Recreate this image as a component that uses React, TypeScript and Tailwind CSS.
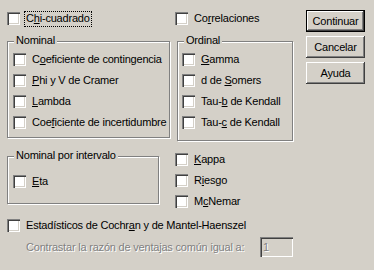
import React from "react";

const face = "bg-[#d4d0c8]";

function Box() {
  return (
    <span className="block w-[13px] h-[13px] shrink-0 bg-white shadow-[inset_1px_1px_0_#808080,inset_2px_2px_0_#404040,inset_-1px_-1px_0_#fff,inset_-2px_-2px_0_#d4d0c8]" />
  );
}

interface CheckProps {
  children: React.ReactNode;
  focused?: boolean;
}

function Check({ children, focused }: CheckProps) {
  return (
    <div className="flex items-center h-[13px]">
      <Box />
      {focused ? (
        <span className="ml-[4px] px-[1px] h-[16px] flex items-center border border-dotted border-black">
          {children}
        </span>
      ) : (
        <span className="ml-[6px] whitespace-nowrap">{children}</span>
      )}
    </div>
  );
}

interface GroupProps {
  title: string;
  className: string;
  children?: React.ReactNode;
}

function Group({ title, className, children }: GroupProps) {
  return (
    <div
      className={`relative border border-[#808080] shadow-[inset_1px_1px_0_#fff,1px_1px_0_#fff] ${className}`}
    >
      <span className={`absolute top-[-8px] left-[6px] px-[2px] leading-[13px] whitespace-nowrap ${face}`}>
        {title}
      </span>
      {children}
    </div>
  );
}

function Button({ label, primary }: { label: string; primary?: boolean }) {
  return (
    <div
      className={`w-[59px] h-[22px] flex items-center justify-center ${face} shadow-[inset_-1px_-1px_0_#404040,inset_1px_1px_0_#fff,inset_-2px_-2px_0_#808080] ${
        primary ? "border border-black" : ""
      }`}
    >
      {label}
    </div>
  );
}

export default function App() {
  return (
    <div
      className={`w-[374px] h-[270px] ${face} flex text-[11px] leading-[13px] tracking-[-0.2px] text-black font-['Liberation_Sans',Arial,sans-serif] overflow-hidden`}
    >
      <div className="w-[299px] ml-[7px]">
        <div className="mt-[12px] flex">
          <div className="w-[168px]">
            <Check focused>
              C<u>h</u>i-cuadrado
            </Check>
          </div>
          <Check>
            Co<u>r</u>relaciones
          </Check>
        </div>

        <div className="mt-[16px] flex items-start">
          <Group title="Nominal" className="w-[163px] h-[97px] pl-[5px] pt-[11px]">
            <div className="flex flex-col gap-[8px]">
              <Check>
                C<u>o</u>eficiente de contingencia
              </Check>
              <Check>
                <u>P</u>hi y V de Cramer
              </Check>
              <Check>
                <u>L</u>ambda
              </Check>
              <Check>
                Coe<u>f</u>iciente de incertidumbre
              </Check>
            </div>
          </Group>
          <Group title="Ordinal" className="ml-[7px] w-[116px] h-[100px] pl-[4px] pt-[11px]">
            <div className="flex flex-col gap-[8px]">
              <Check>
                <u>G</u>amma
              </Check>
              <Check>
                d de <u>S</u>omers
              </Check>
              <Check>
                Tau-<u>b</u> de Kendall
              </Check>
              <Check>
                Tau-<u>c</u> de Kendall
              </Check>
            </div>
          </Group>
        </div>

        <div className="mt-[12px] flex items-start">
          <Group title="Nominal por intervalo" className="mt-[3px] w-[152px] h-[48px] pl-[5px] pt-[18px]">
            <Check>
              <u>E</u>ta
            </Check>
          </Group>
          <div className="ml-[16px] flex flex-col gap-[8px]">
            <Check>
              <u>K</u>appa
            </Check>
            <Check>
              R<u>i</u>esgo
            </Check>
            <Check>
              M<u>c</u>Nemar
            </Check>
          </div>
        </div>

        <div className="mt-[11px]">
          <Check>
            Estadísticos de Cochr<u>a</u>n y de Mantel-Haenszel
          </Check>
        </div>

        <div className="mt-[5px] w-[286px] flex items-center justify-between">
          <span className="pl-[19px] pt-[1px] text-[#808080] [text-shadow:1px_1px_0_#fff] whitespace-nowrap">
            Contrastar la razón de ventajas común igual a:
          </span>
          <div className={`w-[33px] h-[20px] pl-[3px] flex items-center ${face} shadow-[inset_1px_1px_0_#808080,inset_2px_2px_0_#404040,inset_-1px_-1px_0_#fff,inset_-2px_-2px_0_#d4d0c8]`}>
            <span className="text-[#808080] [text-shadow:1px_1px_0_#fff]">1</span>
          </div>
        </div>
      </div>

      <div className="mt-[10px] flex flex-col gap-[4px]">
        <Button label="Continuar" primary />
        <Button label="Cancelar" />
        <Button label="Ayuda" />
      </div>
    </div>
  );
}
